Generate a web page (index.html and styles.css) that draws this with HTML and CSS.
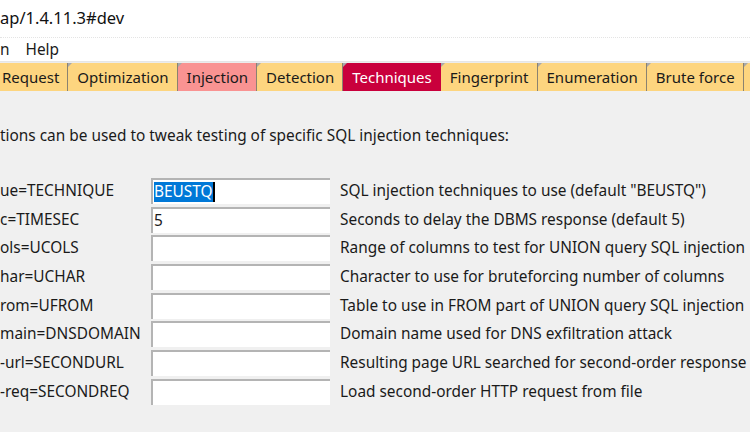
FILE: index.html
```html
<!DOCTYPE html>
<html>

<head>
    <title>sqlmap</title>
    <link rel="stylesheet" href="styles.css">
</head>

<body>
    <div class="titlebar">ap/1.4.11.3#dev</div>
    <div class="menubar">
        <span>n</span>
        <span>Help</span>
    </div>
    <div class="tabs">
        <div class="tab">Request</div>
        <div class="tab">Optimization</div>
        <div class="tab injection">Injection</div>
        <div class="tab">Detection</div>
        <div class="tab active">Techniques</div>
        <div class="tab">Fingerprint</div>
        <div class="tab">Enumeration</div>
        <div class="tab">Brute force</div>
        <div class="tab"></div>
    </div>
    <div class="panel">
        <p class="intro">tions can be used to tweak testing of specific SQL injection techniques:</p>
        <div class="options">
            <div class="label">ue=TECHNIQUE</div>
            <div class="entry"><span class="selected">BEUSTQ</span><span class="caret"></span></div>
            <div class="desc">SQL injection techniques to use (default "BEUSTQ")</div>

            <div class="label">c=TIMESEC</div>
            <div class="entry">5</div>
            <div class="desc">Seconds to delay the DBMS response (default 5)</div>

            <div class="label">ols=UCOLS</div>
            <div class="entry"></div>
            <div class="desc">Range of columns to test for UNION query SQL injection</div>

            <div class="label">har=UCHAR</div>
            <div class="entry"></div>
            <div class="desc">Character to use for bruteforcing number of columns</div>

            <div class="label">rom=UFROM</div>
            <div class="entry"></div>
            <div class="desc">Table to use in FROM part of UNION query SQL injection</div>

            <div class="label">main=DNSDOMAIN</div>
            <div class="entry"></div>
            <div class="desc">Domain name used for DNS exfiltration attack</div>

            <div class="label">-url=SECONDURL</div>
            <div class="entry"></div>
            <div class="desc">Resulting page URL searched for second-order response</div>

            <div class="label">-req=SECONDREQ</div>
            <div class="entry"></div>
            <div class="desc">Load second-order HTTP request from file</div>
        </div>
    </div>
</body>

</html>
```

FILE: styles.css
```css
body {
    margin: 0;
    width: 750px;
    height: 432px;
    overflow: hidden;
    background-color: #f0f0f0;
    color: #1a1a1a;
    font-family: "Noto Sans", "Open Sans", sans-serif;
    font-size: 15.4px;
}

.titlebar {
    background-color: #fff;
    height: 37px;
    line-height: 36px;
    font-size: 16.5px;
    color: #111;
    border-bottom: 1px dotted #e4e4e4;
}

.menubar {
    background-color: #fff;
    height: 23px;
    line-height: 24px;
    border-bottom: 1px solid #e6e6e6;
    display: flex;
    gap: 16px;
}

.tabs {
    display: flex;
    height: 28px;
    margin-left: -7px;
    overflow: hidden;
    white-space: nowrap;
    border-top: 1px solid #ececec;
    font-size: 15px;
}

.tab {
    position: relative;
    flex-shrink: 0;
    min-width: 12px;
    background-color: #fdd57f;
    padding: 0 8px 0 9px;
    line-height: 28px;
    border-right: 1px solid #8a8270;
}

.tab::before {
    content: "";
    position: absolute;
    left: 0;
    top: 0;
    border-top: 4px solid #a8a8a8;
    border-right: 4px solid transparent;
}

.tab.injection {
    background-color: #f99392;
}

.tab.active {
    background-color: #c9003c;
    color: #fff;
    border-right-color: #c9003c;
}

.panel {
    padding-top: 34px;
}

.intro {
    margin: 0 0 31px 0;
    line-height: 22px;
    white-space: nowrap;
}

.options {
    display: grid;
    grid-template-columns: 151px 179px 420px;
    grid-auto-rows: 26px;
    row-gap: 2.7px;
    white-space: nowrap;
}

.label {
    line-height: 26px;
    overflow: hidden;
}

.entry {
    background-color: #fff;
    border-top: 2px solid #b4b4b4;
    border-left: 2px solid #b4b4b4;
    padding-left: 1px;
    line-height: 22px;
    display: flex;
    align-items: center;
}

.selected {
    background-color: #0078d7;
    color: #fff;
    line-height: 20px;
}

.caret {
    display: inline-block;
    width: 2px;
    height: 20px;
    background-color: #000;
}

.desc {
    padding-left: 10px;
    line-height: 26px;
    overflow: hidden;
}
```
